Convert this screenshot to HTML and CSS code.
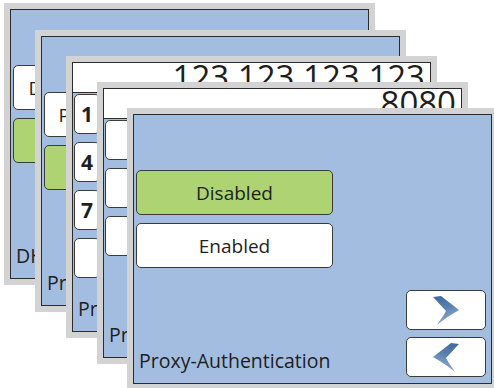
FILE: index.html
```html
<!DOCTYPE html>
<html lang="en">
  <head>
    <meta charset="UTF-8" />
    <meta name="viewport" content="width=device-width, initial-scale=1" />
    <title>Setup Screens</title>
    <link rel="stylesheet" href="styles.css">
  </head>
  <body>
    <!-- shared gradient for the arrow glyphs -->
    <svg class="defs" aria-hidden="true">
      <defs>
        <linearGradient id="arrowfill" x1="0" y1="0" x2="0.3" y2="1">
          <stop offset="0" stop-color="#3a679c" />
          <stop offset="0.5" stop-color="#5b80ae" />
          <stop offset="1" stop-color="#91acd0" />
        </linearGradient>
      </defs>
    </svg>

    <div class="desk">
      <!-- screen 1: DHCP -->
      <section class="frame f1">
        <div class="screen">
          <div class="options">
            <div class="opt">Dynamic IP (DHCP)</div>
            <div class="opt opt-on">Static IP</div>
          </div>
          <div class="footer">
            <span class="title">DHCP</span>
            <div class="nav">
              <div class="nav-btn"><svg viewBox="0 0 26 29"><path d="M0 1 L8 0 C14 5 20 9 26 14 C19 18 11 23 4 29 C7 24 11 19 13 15 C9 11 5 6 0 1 Z" fill="url(#arrowfill)" /></svg></div>
              <div class="nav-btn back"><svg viewBox="0 0 26 29"><path d="M0 1 L8 0 C14 5 20 9 26 14 C19 18 11 23 4 29 C7 24 11 19 13 15 C9 11 5 6 0 1 Z" fill="url(#arrowfill)" /></svg></div>
            </div>
          </div>
        </div>
      </section>

      <!-- screen 2: proxy on/off -->
      <section class="frame f2">
        <div class="screen">
          <div class="options">
            <div class="opt">Proxy server in use</div>
            <div class="opt opt-on">No proxy</div>
          </div>
          <div class="footer">
            <span class="title">Proxy</span>
            <div class="nav">
              <div class="nav-btn"><svg viewBox="0 0 26 29"><path d="M0 1 L8 0 C14 5 20 9 26 14 C19 18 11 23 4 29 C7 24 11 19 13 15 C9 11 5 6 0 1 Z" fill="url(#arrowfill)" /></svg></div>
              <div class="nav-btn back"><svg viewBox="0 0 26 29"><path d="M0 1 L8 0 C14 5 20 9 26 14 C19 18 11 23 4 29 C7 24 11 19 13 15 C9 11 5 6 0 1 Z" fill="url(#arrowfill)" /></svg></div>
            </div>
          </div>
        </div>
      </section>

      <!-- screen 3: proxy address -->
      <section class="frame f3">
        <div class="screen">
          <div class="field">123.123.123.123</div>
          <div class="keypad">
            <div class="key">1</div><div class="key">2</div><div class="key">3</div>
            <div class="key">4</div><div class="key">5</div><div class="key">6</div>
            <div class="key">7</div><div class="key">8</div><div class="key">9</div>
            <div class="key"></div><div class="key">0</div><div class="key"></div>
          </div>
          <div class="footer">
            <span class="title">Proxy-Server</span>
          </div>
        </div>
      </section>

      <!-- screen 4: proxy port -->
      <section class="frame f4">
        <div class="screen">
          <div class="field">8080</div>
          <div class="keypad wide">
            <div class="key">1</div><div class="key">2</div><div class="key">3</div>
            <div class="key">4</div><div class="key">5</div><div class="key">6</div>
            <div class="key">7</div><div class="key">8</div><div class="key">9</div>
          </div>
          <div class="footer">
            <span class="title">Proxy-Port</span>
          </div>
        </div>
      </section>

      <!-- screen 5: proxy authentication (front) -->
      <section class="frame f5">
        <div class="screen">
          <div class="options">
            <div class="opt opt-on">Disabled</div>
            <div class="opt">Enabled</div>
          </div>
          <div class="footer">
            <span class="title">Proxy-Authentication</span>
            <div class="nav">
              <div class="nav-btn"><svg viewBox="0 0 26 29"><path d="M0 1 L8 0 C14 5 20 9 26 14 C19 18 11 23 4 29 C7 24 11 19 13 15 C9 11 5 6 0 1 Z" fill="url(#arrowfill)" /></svg></div>
              <div class="nav-btn back"><svg viewBox="0 0 26 29"><path d="M0 1 L8 0 C14 5 20 9 26 14 C19 18 11 23 4 29 C7 24 11 19 13 15 C9 11 5 6 0 1 Z" fill="url(#arrowfill)" /></svg></div>
            </div>
          </div>
        </div>
      </section>
    </div>
  </body>
</html>
```

FILE: styles.css
```css
html,
body {
  margin: 0;
  padding: 0;
  background: white;
  font-family: "Open Sans", "Noto Sans", sans-serif;
  color: #1e1e1e;
}
.defs {
  position: absolute;
  width: 0;
  height: 0;
}
.desk {
  position: relative;
  width: 494px;
  height: 388px;
  overflow: hidden;
}

/* each screen is a window stacked on the desk */
.frame {
  position: absolute;
  width: 371px;
  height: 282px;
  box-sizing: border-box;
  padding: 6px;
  background: #d3d3d3;
}
.f1 { left: 4px; top: 3px; }
.f2 { left: 35px; top: 30px; }
.f3 { left: 66px; top: 56px; }
.f4 { left: 97px; top: 82px; }
.f5 { left: 127px; top: 108px; }

.screen {
  box-sizing: border-box;
  height: 100%;
  border: 1px solid #2c2c2c;
  background: #a3bde1;
  display: flex;
  flex-direction: column;
  overflow: hidden;
}

.options {
  display: flex;
  flex-direction: column;
  gap: 8px;
  padding: 55px 0 0 2px;
}
.opt {
  box-sizing: border-box;
  width: 197px;
  height: 45px;
  border: 1px solid #3b3b3b;
  border-radius: 5px;
  background: #fff;
  display: flex;
  align-items: center;
  justify-content: center;
  font-size: 19px;
  white-space: nowrap;
}
.opt-on {
  background: #add373;
}

.field {
  box-sizing: border-box;
  flex-shrink: 0;
  height: 30px;
  padding-right: 5px;
  background: #fff;
  border-bottom: 1px solid #2c2c2c;
  text-align: right;
  font-size: 33px;
  line-height: 28px;
  white-space: nowrap;
  overflow: hidden;
}

.keypad {
  display: grid;
  grid-template-columns: repeat(3, 26px);
  gap: 8px 6px;
  padding: 1px 0 0 1px;
}
.keypad.wide {
  grid-template-columns: repeat(3, 90px);
}
.key {
  box-sizing: border-box;
  height: 40px;
  border: 1px solid #3b3b3b;
  border-radius: 5px;
  background: #fff;
  display: flex;
  align-items: center;
  justify-content: center;
  font-size: 21px;
  font-weight: 700;
}

.footer {
  margin-top: auto;
  display: flex;
  justify-content: space-between;
  align-items: flex-end;
  padding: 0 5px 6px 5px;
}
.title {
  font-size: 19.5px;
  line-height: 24px;
  margin-bottom: 4px;
  white-space: nowrap;
}
.nav {
  display: flex;
  flex-direction: column;
  gap: 7px;
}
.nav-btn {
  box-sizing: border-box;
  width: 80px;
  height: 40px;
  border: 1px solid #3b3b3b;
  border-radius: 5px;
  background: #fff;
  display: flex;
  align-items: center;
  justify-content: center;
}
.nav-btn svg {
  width: 26px;
  height: 29px;
}
.nav-btn.back svg {
  transform: scaleX(-1);
}
```
